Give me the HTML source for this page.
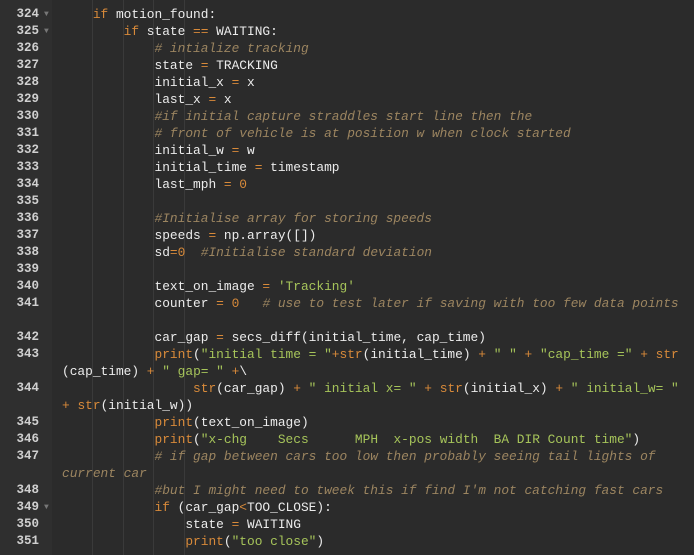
<!DOCTYPE html>
<html><head><style>
body{margin:0;width:694px;height:555px;overflow:hidden;background:#2b2b2b;font-family:"Liberation Mono",monospace;font-size:12.85px;}
.g{position:absolute;left:0;top:0;width:52px;height:555px;background:#2f2f2f;}
.l{position:absolute;left:0;height:17px;line-height:17px;white-space:pre;color:#ececec;}
.n{position:absolute;left:0;width:39px;text-align:right;color:#d0d0d0;font-weight:bold;font-size:12.5px;}
.f{position:absolute;left:44px;color:#777;font-size:8px;}
.c{position:absolute;left:62px;}
.k{color:#d88a3a}.s{color:#a6c45a}.m{color:#9c8560;font-style:italic}.o{color:#d88a3a}.d{color:#d88a3a}
.v{position:absolute;width:1px;background:#3a3a3a;top:0;height:555px;}
</style></head><body>
<div class="g"></div>
<div class="v" style="left:92px"></div><div class="v" style="left:123px"></div><div class="v" style="left:153px"></div><div class="v" style="left:184px"></div>
<div class="l" style="top:-11px"><span class="n">323</span></div>
<div class="l" style="top:6px"><span class="n">324</span><span class="f">▼</span><span class="c">    <span class="k">if</span> motion_found:</span></div>
<div class="l" style="top:23px"><span class="n">325</span><span class="f">▼</span><span class="c">        <span class="k">if</span> state <span class="o">==</span> WAITING:</span></div>
<div class="l" style="top:40px"><span class="n">326</span><span class="c">            <span class="m"># intialize tracking</span></span></div>
<div class="l" style="top:57px"><span class="n">327</span><span class="c">            state <span class="o">=</span> TRACKING</span></div>
<div class="l" style="top:74px"><span class="n">328</span><span class="c">            initial_x <span class="o">=</span> x</span></div>
<div class="l" style="top:91px"><span class="n">329</span><span class="c">            last_x <span class="o">=</span> x</span></div>
<div class="l" style="top:108px"><span class="n">330</span><span class="c">            <span class="m">#if initial capture straddles start line then the</span></span></div>
<div class="l" style="top:125px"><span class="n">331</span><span class="c">            <span class="m"># front of vehicle is at position w when clock started</span></span></div>
<div class="l" style="top:142px"><span class="n">332</span><span class="c">            initial_w <span class="o">=</span> w</span></div>
<div class="l" style="top:159px"><span class="n">333</span><span class="c">            initial_time <span class="o">=</span> timestamp</span></div>
<div class="l" style="top:176px"><span class="n">334</span><span class="c">            last_mph <span class="o">=</span> <span class="d">0</span></span></div>
<div class="l" style="top:193px"><span class="n">335</span></div>
<div class="l" style="top:210px"><span class="n">336</span><span class="c">            <span class="m">#Initialise array for storing speeds</span></span></div>
<div class="l" style="top:227px"><span class="n">337</span><span class="c">            speeds <span class="o">=</span> np.array([])</span></div>
<div class="l" style="top:244px"><span class="n">338</span><span class="c">            sd<span class="o">=</span><span class="d">0</span>  <span class="m">#Initialise standard deviation</span></span></div>
<div class="l" style="top:261px"><span class="n">339</span></div>
<div class="l" style="top:278px"><span class="n">340</span><span class="c">            text_on_image <span class="o">=</span> <span class="s">'Tracking'</span></span></div>
<div class="l" style="top:295px"><span class="n">341</span><span class="c">            counter <span class="o">=</span> <span class="d">0</span>   <span class="m"># use to test later if saving with too few data points</span></span></div>
<div class="l" style="top:329px"><span class="n">342</span><span class="c">            car_gap <span class="o">=</span> secs_diff(initial_time, cap_time)</span></div>
<div class="l" style="top:346px"><span class="n">343</span><span class="c">            <span class="k">print</span>(<span class="s">"initial time = "</span><span class="o">+</span><span class="k">str</span>(initial_time) <span class="o">+</span> <span class="s">" "</span> <span class="o">+</span> <span class="s">"cap_time ="</span> <span class="o">+</span> <span class="k">str</span></span></div>
<div class="l" style="top:363px"><span class="c">(cap_time) <span class="o">+</span> <span class="s">" gap= "</span> <span class="o">+</span>\</span></div>
<div class="l" style="top:380px"><span class="n">344</span><span class="c">                 <span class="k">str</span>(car_gap) <span class="o">+</span> <span class="s">" initial x= "</span> <span class="o">+</span> <span class="k">str</span>(initial_x) <span class="o">+</span> <span class="s">" initial_w= "</span></span></div>
<div class="l" style="top:397px"><span class="c"><span class="o">+</span> <span class="k">str</span>(initial_w))</span></div>
<div class="l" style="top:414px"><span class="n">345</span><span class="c">            <span class="k">print</span>(text_on_image)</span></div>
<div class="l" style="top:431px"><span class="n">346</span><span class="c">            <span class="k">print</span>(<span class="s">"x-chg    Secs      MPH  x-pos width  BA DIR Count time"</span>)</span></div>
<div class="l" style="top:448px"><span class="n">347</span><span class="c">            <span class="m"># if gap between cars too low then probably seeing tail lights of</span></span></div>
<div class="l" style="top:465px"><span class="c"><span class="m">current car</span></span></div>
<div class="l" style="top:482px"><span class="n">348</span><span class="c">            <span class="m">#but I might need to tweek this if find I'm not catching fast cars</span></span></div>
<div class="l" style="top:499px"><span class="n">349</span><span class="f">▼</span><span class="c">            <span class="k">if</span> (car_gap<span class="o">&lt;</span>TOO_CLOSE):</span></div>
<div class="l" style="top:516px"><span class="n">350</span><span class="c">                state <span class="o">=</span> WAITING</span></div>
<div class="l" style="top:533px"><span class="n">351</span><span class="c">                <span class="k">print</span>(<span class="s">"too close"</span>)</span></div>
</body></html>
